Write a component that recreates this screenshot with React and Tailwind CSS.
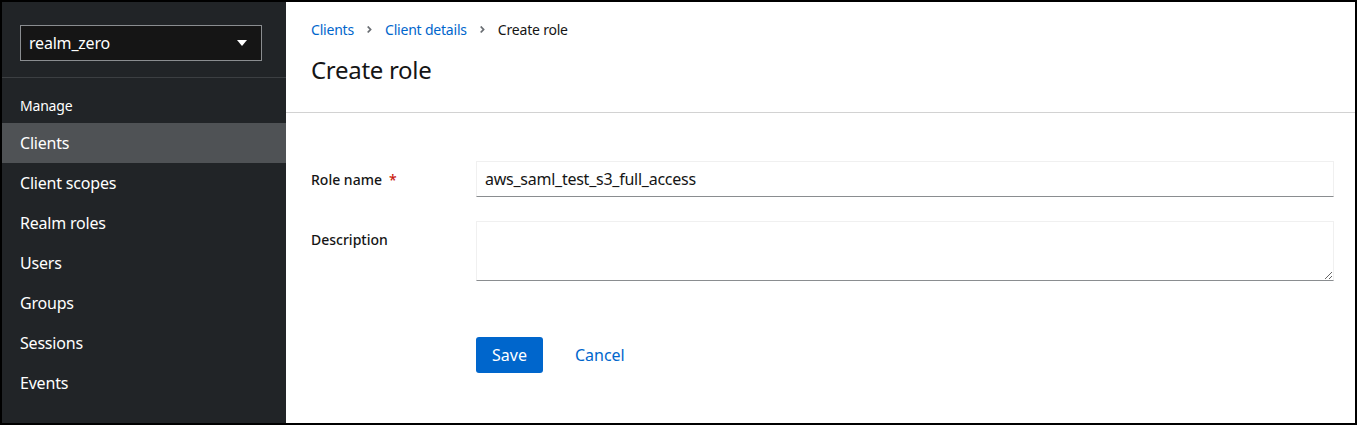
import { useState } from "react";

const navItems = [
  "Clients",
  "Client scopes",
  "Realm roles",
  "Users",
  "Groups",
  "Sessions",
  "Events",
];

function Chevron() {
  return (
    <svg viewBox="0 0 256 512" className="w-[7px] h-[11px] fill-[#6a6e73]">
      <path d="M224.3 273l-136 136c-9.4 9.4-24.6 9.4-33.9 0l-22.6-22.6c-9.4-9.4-9.4-24.6 0-33.9l96.4-96.4-96.4-96.4c-9.4-9.4-9.4-24.6 0-33.9L54.3 103c9.4-9.4 24.6-9.4 33.9 0l136 136c9.5 9.4 9.5 24.6.1 34z" />
    </svg>
  );
}

export default function App() {
  const [roleName, setRoleName] = useState("aws_saml_test_s3_full_access");
  const [description, setDescription] = useState("");

  return (
    <div className="w-[1357px] h-[425px] bg-black p-[2px] font-['Noto_Sans',sans-serif]">
      <div className="flex h-full bg-white">
        {/* Sidebar */}
        <aside className="w-[284px] shrink-0 bg-[#212427] text-white">
          <div className="pl-[18px] pr-[24px] pt-[23px] pb-[16px] border-b border-[#3c3f42]">
            <div className="flex items-center justify-between h-[36px] bg-[#151515] border border-[#8a8d90] pl-[8px] pr-[14px]">
              <span className="text-[16px] tracking-[-0.2px]">realm_zero</span>
              <svg viewBox="0 0 10 6" className="w-[10px] h-[6px] fill-white">
                <path d="M0 0h10L5 6z" />
              </svg>
            </div>
          </div>
          <div className="pt-[16px]">
            <div className="px-[18px] h-[22px] flex items-center text-[14px] mb-[7px] tracking-[-0.2px]">
              Manage
            </div>
            {navItems.map((item, i) => (
              <div
                key={item}
                className={
                  "h-[40px] flex items-center px-[18px] text-[16px] tracking-[-0.2px] " +
                  (i === 0 ? "bg-[#4f5255]" : "")
                }
              >
                {item}
              </div>
            ))}
          </div>
        </aside>

        {/* Main */}
        <main className="flex-1 min-w-0">
          <div className="border-b border-[#d2d2d2] pl-[25px] pt-[17px] h-[111px]">
            <nav className="flex items-center gap-[12px] text-[14px] h-[21px] tracking-[-0.2px]">
              <span className="text-[#0066cc]">Clients</span>
              <Chevron />
              <span className="text-[#0066cc]">Client details</span>
              <Chevron />
              <span className="text-[#151515]">Create role</span>
            </nav>
            <h1 className="mt-[13px] text-[24px] leading-[34px] text-[#151515] tracking-[-0.3px]">
              Create role
            </h1>
          </div>

          <div className="pl-[25px] pr-[21px] pt-[48px]">
            <div className="grid grid-cols-[165px_1fr] gap-y-[24px]">
              <label className="pt-[8px] text-[14px] leading-[21px] font-medium text-[#151515]">
                Role name
                <span className="text-[#c9190b] ml-[7px]">*</span>
              </label>
              <input
                value={roleName}
                onChange={(e) => setRoleName(e.target.value)}
                className="h-[36px] px-[8px] text-[16px] tracking-[-0.25px] text-[#151515] border border-[#f0f0f0] border-b-[#8a8d90] outline-none"
              />
              <label className="pt-[8px] text-[14px] leading-[21px] font-medium text-[#151515]">
                Description
              </label>
              <textarea
                value={description}
                onChange={(e) => setDescription(e.target.value)}
                className="h-[60px] px-[8px] py-[6px] text-[16px] border border-[#f0f0f0] border-b-[#8a8d90] outline-none resize-y block"
              />
            </div>
            <div className="flex items-center gap-[16px] mt-[56px] ml-[165px]">
              <button className="h-[36px] px-[16px] bg-[#0066cc] text-white text-[16px] rounded-[3px]">
                Save
              </button>
              <button className="h-[36px] px-[16px] text-[#0066cc] text-[16px]">
                Cancel
              </button>
            </div>
          </div>
        </main>
      </div>
    </div>
  );
}
